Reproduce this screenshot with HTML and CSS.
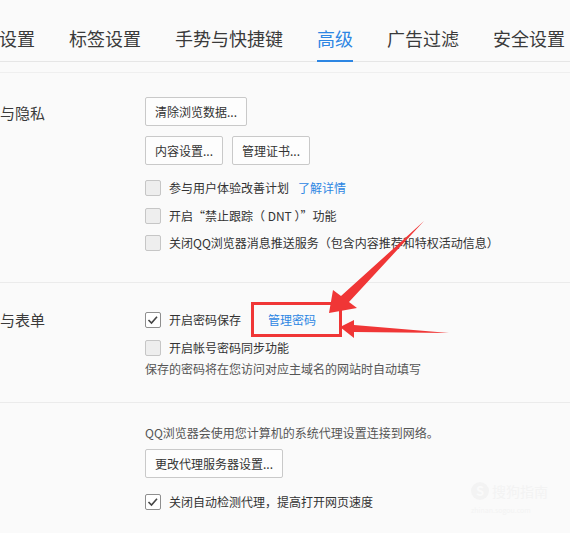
FILE: index.html
```html
<!DOCTYPE html>
<html lang="zh-CN">
<head>
    <meta charset="UTF-8">
    <title>高级设置</title>
    <link rel="stylesheet" href="styles.css">
</head>
<body>
    <nav class="tabs">
        <a class="tab">设置</a>
        <a class="tab">标签设置</a>
        <a class="tab">手势与快捷键</a>
        <a class="tab tab-active">高级</a>
        <a class="tab">广告过滤</a>
        <a class="tab">安全设置</a>
    </nav>
    <div class="subbar"></div>

    <!-- 隐私 -->
    <section class="section section-privacy">
        <div class="section-label label-offset">与隐私</div>
        <div class="section-body">
            <div class="btn-row">
                <button class="btn">清除浏览数据...</button>
            </div>
            <div class="btn-row">
                <button class="btn">内容设置...</button>
                <button class="btn">管理证书...</button>
            </div>
            <label class="check-row first-check">
                <span class="checkbox"></span>参与用户体验改善计划<a class="link">了解详情</a>
            </label>
            <label class="check-row">
                <span class="checkbox"></span>开启“禁止跟踪（ DNT ）”功能
            </label>
            <label class="check-row">
                <span class="checkbox"></span>关闭QQ浏览器消息推送服务（包含内容推荐和特权活动信息）
            </label>
        </div>
    </section>

    <!-- 密码与表单 -->
    <section class="section section-forms">
        <div class="section-label">与表单</div>
        <div class="section-body">
            <label class="check-row">
                <span class="checkbox checked">
                    <svg viewBox="0 0 14 14" width="14" height="14"><path d="M2.5 7 L5.5 10 L11 3.8" fill="none" stroke="#444" stroke-width="1.6"/></svg>
                </span>开启密码保存<a class="link link-wide">管理密码</a>
            </label>
            <label class="check-row">
                <span class="checkbox"></span>开启帐号密码同步功能
            </label>
            <p class="hint">保存的密码将在您访问对应主域名的网站时自动填写</p>
        </div>
    </section>

    <!-- 网络 -->
    <section class="section section-network">
        <div class="section-label"></div>
        <div class="section-body">
            <p class="hint hint-top">QQ浏览器会使用您计算机的系统代理设置连接到网络。</p>
            <div class="btn-row proxy-row">
                <button class="btn">更改代理服务器设置...</button>
            </div>
            <label class="check-row proxy-check">
                <span class="checkbox checked">
                    <svg viewBox="0 0 14 14" width="14" height="14"><path d="M2.5 7 L5.5 10 L11 3.8" fill="none" stroke="#444" stroke-width="1.6"/></svg>
                </span>关闭自动检测代理，提高打开网页速度
            </label>
        </div>
    </section>

    <!-- annotation marks drawn over the page -->
    <svg class="annotations" width="570" height="533" viewBox="0 0 570 533">
        <rect x="252.5" y="303.5" width="88" height="32" fill="none" stroke="#f03636" stroke-width="3"/>
        <polygon points="424,221 349,302 357,308 329,313 333,290 341,296" fill="#f03636"/>
        <polygon points="449,333 354,332 354,338 340,327 354,320 354,325" fill="#f03636"/>
    </svg>

    <div class="watermark">
        <span class="wm-logo">S</span><span class="wm-text">搜狗指南</span>
        <div class="wm-url">zhinan.sogou.com</div>
    </div>
</body>
</html>
```

FILE: styles.css
```css
body {
    margin: 0;
    width: 570px;
    height: 533px;
    overflow: hidden;
    position: relative;
    background-color: #fafafa;
    color: #333;
    font-family: "Noto Sans CJK SC", "Noto Sans", sans-serif;
}

.tabs {
    display: flex;
    gap: 34px;
    margin-left: -1px;
    white-space: nowrap;
    border-bottom: 1px solid #e6e6e6;
}
.tab {
    padding: 26px 0 10px;
    margin-bottom: -1px;
    font-size: 18px;
    line-height: 24px;
    color: #3a3a3a;
    border-bottom: 2px solid transparent;
}
.tab-active {
    color: #2d86e3;
    border-bottom-color: #2d86e3;
}

.subbar {
    height: 10px;
    border-bottom: 1px solid #efefef;
}

.section {
    display: flex;
    border-bottom: 1px solid #ebebeb;
}
.section-label {
    width: 145px;
    flex: none;
    font-size: 15px;
    line-height: 16px;
    color: #3a3a3a;
}
.label-offset {
    margin-top: 8px;
}
.section-body {
    font-size: 12px;
    line-height: 16px;
}

.section-privacy {
    padding: 24px 0 31px;
}
.section-forms {
    padding: 29px 0 25px;
}
.section-network {
    padding: 22px 0 0;
    border-bottom: none;
}

.btn-row {
    display: flex;
    gap: 9px;
}
.btn-row + .btn-row {
    margin-top: 10px;
}
.btn {
    height: 29px;
    padding: 0 9px;
    border: 1px solid #c9c9c9;
    border-radius: 2px;
    background-color: #fdfdfd;
    color: #333;
    font-family: inherit;
    font-size: 12px;
}

.check-row {
    display: flex;
    align-items: center;
    height: 16px;
    margin-top: 11.5px;
    white-space: nowrap;
}
.section-forms .check-row:first-child {
    margin-top: 0;
}
.first-check {
    margin-top: 15px;
}
.checkbox {
    box-sizing: border-box;
    width: 16px;
    height: 16px;
    margin-right: 8px;
    flex: none;
    border: 1px solid #c6c6c6;
    border-radius: 2px;
    background-color: #eeeeee;
    display: flex;
    align-items: center;
    justify-content: center;
}
.checkbox.checked {
    background-color: #fff;
    border-color: #8e8e8e;
}

.link {
    color: #2d86e3;
    margin-left: 9px;
}
.link-wide {
    margin-left: 27px;
}

.hint {
    margin: 5px 0 0;
    color: #555;
}
.hint-top {
    margin-top: 0;
}
.proxy-row {
    margin-top: 8px;
}
.proxy-check {
    margin-top: 16px;
}

.annotations {
    position: absolute;
    top: 0;
    left: 0;
    pointer-events: none;
}

.watermark {
    position: absolute;
    left: 471px;
    top: 476px;
    color: #f3f3f3;
}
.wm-logo {
    display: inline-block;
    width: 18px;
    height: 18px;
    border-radius: 50%;
    background-color: #f3f3f3;
    color: #fafafa;
    font-size: 13px;
    line-height: 18px;
    text-align: center;
    font-weight: bold;
    vertical-align: middle;
}
.wm-text {
    font-size: 14px;
    margin-left: 3px;
    vertical-align: middle;
}
.wm-url {
    font-size: 7px;
    line-height: 10px;
    margin-top: 4px;
}
```
